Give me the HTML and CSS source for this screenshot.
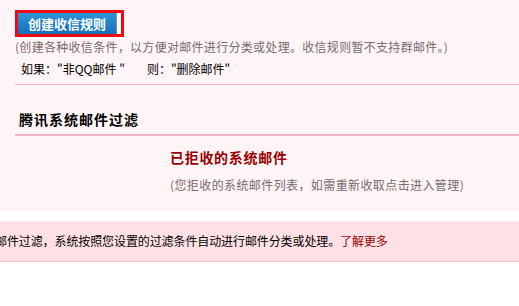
FILE: index.html
```html
<!DOCTYPE html>
<html lang="zh-CN">
<head>
<meta charset="utf-8">
<title>收信规则</title>
<link rel="stylesheet" href="styles.css">
</head>
<body>
<div class="page">
  <div class="main">
    <div class="btn-frame"><span class="btn">创建收信规则</span></div>
    <p class="desc">(创建各种收信条件，以方便对邮件进行分类或处理。收信规则暂不支持群邮件。)</p>
    <p class="example">如果："非QQ邮件 "<span class="gap"></span>则："删除邮件"</p>
    <div class="rule-line"></div>
    <h2 class="section-title">腾讯系统邮件过滤</h2>
    <div class="section-line"></div>
    <div class="rejected">
      <div class="rejected-title">已拒收的系统邮件</div>
      <div class="rejected-desc">(您拒收的系统邮件列表，如需重新收取点击进入管理)</div>
    </div>
  </div>
  <div class="band"><p class="band-text">邮件过滤，系统按照您设置的过滤条件自动进行邮件分类或处理。<a class="more" href="#">了解更多</a></p></div>
</div>
</body>
</html>
```
FILE: styles.css
```css
html, body {
  margin: 0;
  padding: 0;
  background: #ffffff;
}
body {
  font-family: "Noto Sans CJK SC", "DejaVu Sans", sans-serif;
  font-size: 12px;
  color: #000;
}
.page {
  width: 519px;
  overflow: hidden;
}
.main {
  background: #fff4f6;
  padding: 10px 0 0 15px;
  height: 211px;
  box-sizing: border-box;
}
.btn-frame {
  display: inline-flex;
  border: 3px solid #ee0a12;
  background: #fff;
  padding-right: 4px;
  height: 21px;
  box-sizing: content-box;
}
.btn {
  display: flex;
  align-items: center;
  justify-content: center;
  width: 98px;
  height: 21px;
  background: linear-gradient(#2f93d8, #1570b6);
  border-right: 1px dotted #e0a050;
  color: #fff;
  font-weight: bold;
  font-size: 13px;
  line-height: 21px;
}
.desc {
  margin: 1px 0 0 0;
  color: #786a6e;
  line-height: 18px;
  letter-spacing: 0.3px;
}
.example {
  margin: 4px 0 0 6px;
  line-height: 18px;
  display: flex;
  white-space: pre;
}
.gap {
  display: inline-block;
  width: 22px;
}
.rule-line {
  height: 1px;
  background: #f3b4c8;
  margin-top: 6px;
}
.section-title {
  margin: 24px 0 0 4px;
  font-size: 14px;
  font-weight: bold;
  line-height: 20px;
  letter-spacing: 1px;
}
.section-line {
  height: 2px;
  background: #f3b4c8;
  margin-top: 5px;
}
.rejected {
  padding: 11px 0 0 155px;
}
.rejected-title {
  color: #990000;
  font-weight: bold;
  font-size: 14px;
  line-height: 20px;
  letter-spacing: 0.7px;
}
.rejected-desc {
  color: #786a6e;
  margin-top: 9px;
  line-height: 18px;
  letter-spacing: 0.4px;
}
.band {
  background: #ffe0e5;
  border-bottom: 1px solid #f3b4c8;
  height: 40px;
  margin-top: 10px;
  display: flex;
  align-items: center;
}
.band-text {
  margin: 0 0 0 -5px;
  white-space: nowrap;
  line-height: 18px;
  letter-spacing: -0.1px;
}
.more {
  color: #990000;
  text-decoration: none;
}
```
